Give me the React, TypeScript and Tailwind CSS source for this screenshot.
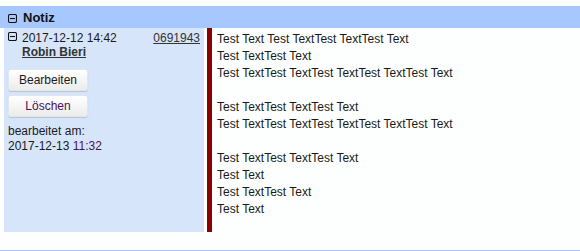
const MinusBox = () => (
  <svg width="9" height="9" viewBox="0 0 9 9" className="shrink-0">
    <rect x="0.5" y="0.5" width="8" height="8" rx="1.5" fill="none" stroke="#111" strokeWidth="1.1" />
    <line x1="2" y1="4.5" x2="7" y2="4.5" stroke="#111" strokeWidth="1.1" />
  </svg>
);

const lines: string[][] = [
  [
    "Test Text Test TextTest TextTest Text",
    "Test TextTest Text",
    "Test TextTest TextTest TextTest TextTest Text",
  ],
  ["Test TextTest TextTest Text", "Test TextTest TextTest TextTest TextTest Text"],
  ["Test TextTest TextTest Text", "Test Text", "Test TextTest Text", "Test Text"],
];

const btn =
  "w-[80px] h-[22px] rounded-[3px] border border-[#e2e6ec] bg-gradient-to-b from-white to-[#ececec] shadow-[0_1px_1px_rgba(0,0,0,0.15)] text-[12px] leading-none";

export default function App() {
  return (
    <div
      className="w-[580px] h-[251px] bg-[#fcfffd] pt-[6px] text-[12px] text-[#1a1a1a] overflow-hidden"
      style={{ fontFamily: '"Liberation Sans", Arial, sans-serif' }}
    >
      <div className="h-[22px] bg-[#a6c8ff] flex items-center pl-[8px] pt-[2px] gap-[6px]">
        <MinusBox />
        <span className="text-[13px] font-bold text-[#111]">Notiz</span>
      </div>

      <div className="flex pl-[4px]">
        <div className="w-[200px] h-[204px] bg-[#d7e5fb] px-[4px] pt-[3px]">
          <div className="flex items-start">
            <div className="pr-[5px] pt-[1px]">
              <MinusBox />
            </div>
            <div className="flex-1 leading-[14px]">
              <div className="flex justify-between">
                <span>2017-12-12 14:42</span>
                <span className="underline text-[#333]">0691943</span>
              </div>
              <div className="font-bold underline text-[#333]">Robin Bieri</div>
            </div>
          </div>

          <div className="flex flex-col gap-[4px] mt-[10px]">
            <button className={btn}>Bearbeiten</button>
            <button className={btn + " text-[#4b1250]"}>Löschen</button>
          </div>

          <div className="mt-[7px] leading-[15px]">
            <div>bearbeitet am:</div>
            <div>
              2017-12-13 <span className="text-[#4b1250]">11:32</span>
            </div>
          </div>
        </div>

        <div className="w-[5px] h-[204px] bg-[#8b0000] ml-[3px]" />

        <div className="pl-[5px] pt-[3px] leading-[17px]">
          {lines.map((group, i) => (
            <div key={i} className={i > 0 ? "mt-[17px]" : ""}>
              {group.map((l, j) => (
                <div key={j}>{l}</div>
              ))}
            </div>
          ))}
        </div>
      </div>

      <div className="mt-[18px] h-[1px] bg-[#a6c8ff]" />
    </div>
  );
}
